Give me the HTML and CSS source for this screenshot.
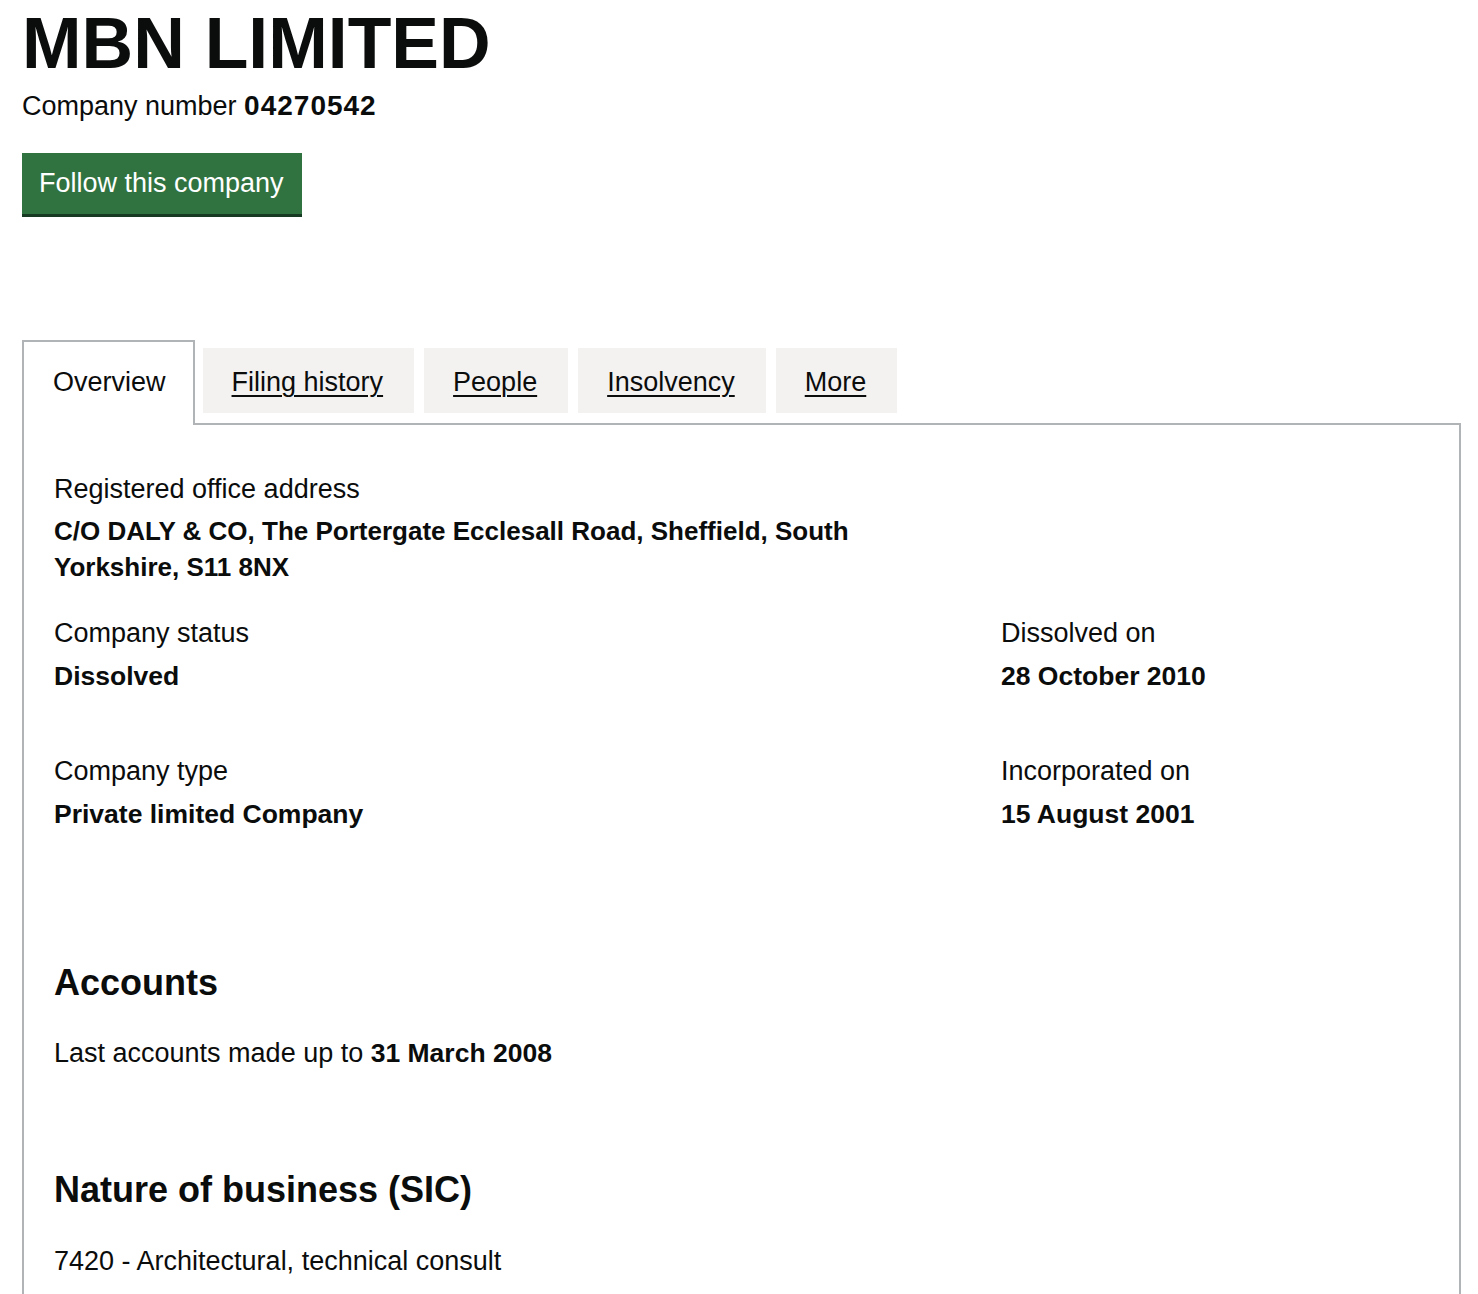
FILE: index.html
```html
<!DOCTYPE html>
<html lang="en">
<head>
<meta charset="utf-8">
<title>MBN LIMITED</title>
<link rel="stylesheet" href="styles.css">
</head>
<body>
<main class="page">
  <h1 class="company-name">MBN LIMITED</h1>
  <p class="company-number">Company number <strong>04270542</strong></p>
  <a class="button" href="#">Follow this company</a>

  <div class="tabs">
    <ul class="tab-list">
      <li class="tab tab-selected"><a class="tab-link" href="#">Overview</a></li>
      <li class="tab"><a class="tab-link" href="#">Filing history</a></li>
      <li class="tab"><a class="tab-link" href="#">People</a></li>
      <li class="tab"><a class="tab-link" href="#">Insolvency</a></li>
      <li class="tab"><a class="tab-link" href="#">More</a></li>
    </ul>
    <section class="panel">
      <dl class="address">
        <dt class="label label-address">Registered office address</dt>
        <dd class="value value-address">C/O DALY &amp; CO, The Portergate Ecclesall Road, Sheffield, South Yorkshire, S11 8NX</dd>
      </dl>

      <div class="grid grid-status">
        <dl class="item">
          <dt class="label">Company status</dt>
          <dd class="value">Dissolved</dd>
        </dl>
        <dl class="item">
          <dt class="label">Dissolved on</dt>
          <dd class="value">28 October 2010</dd>
        </dl>
      </div>

      <div class="grid grid-type">
        <dl class="item">
          <dt class="label">Company type</dt>
          <dd class="value">Private limited Company</dd>
        </dl>
        <dl class="item">
          <dt class="label">Incorporated on</dt>
          <dd class="value">15 August 2001</dd>
        </dl>
      </div>

      <h2 class="heading heading-accounts">Accounts</h2>
      <p class="body">Last accounts made up to <strong>31 March 2008</strong></p>

      <h2 class="heading heading-sic">Nature of business (SIC)</h2>
      <ul class="sic-list">
        <li class="body">7420 - Architectural, technical consult</li>
      </ul>
    </section>
  </div>
</main>
</body>
</html>
```
FILE: styles.css
```css
* { box-sizing: border-box; }

html, body {
  margin: 0;
  padding: 0;
  background: #ffffff;
}

body {
  color: #0b0c0c;
  font-family: "Liberation Sans", Arial, sans-serif;
  font-size: 27px;
  line-height: 36px;
}

.page {
  padding: 8px 17px 0 22px;
}

.company-name {
  margin: 0;
  font-size: 71.5px;
  line-height: 71px;
  font-weight: 700;
}

.company-number {
  margin: 9px 0 0;
}

.company-number strong {
  font-size: 28px;
  font-weight: 700;
  letter-spacing: 1px;
}

.button {
  display: inline-block;
  margin-top: 29px;
  padding: 12px 18px 13px 17px;
  background: #307340;
  color: #ffffff;
  text-decoration: none;
  box-shadow: 0 3px 0 #173a22;
  font-size: 27px;
  line-height: 36px;
}

.tabs {
  margin-top: 126px;
}

.tab-list {
  display: flex;
  align-items: flex-end;
  margin: 0;
  padding: 0;
  list-style: none;
}

.tab {
  margin: 0 10px 10px 0;
  background: #f3f2f1;
  padding: 16px 31px 13px 29px;
}

.tab-link {
  color: #0b0c0c;
  text-decoration: underline;
  text-underline-offset: 4px;
  text-decoration-thickness: 2px;
}

.tab-selected {
  position: relative;
  z-index: 1;
  margin: 0 8px -2px 0;
  background: #ffffff;
  border: 2px solid #b1b4b6;
  border-bottom: 0;
  padding: 22px 27px 25px 29px;
}

.tab-selected .tab-link {
  text-decoration: none;
}

.panel {
  border: 2px solid #b1b4b6;
  padding: 46px 30px 40px;
}

dl, dd { margin: 0; }

.label {
  font-weight: 400;
}

.label-address {
  margin-bottom: 6px;
}

.value {
  font-size: 26px;
  font-weight: 700;
  line-height: 36px;
}

.address {
  width: 916px;
}

.grid {
  display: grid;
  grid-template-columns: 2fr 1fr;
  column-gap: 91px;
}

.grid-status {
  margin-top: 30px;
}

.grid-type {
  margin-top: 59px;
}

.item .label {
  margin-bottom: 7px;
}

.item .value {
  font-size: 26.5px;
}

.heading {
  margin: 0;
  font-size: 36px;
  line-height: 40px;
  font-weight: 700;
}

.heading-accounts {
  margin-top: 131px;
}

.heading-sic {
  margin-top: 99px;
}

.body {
  margin: 32px 0 0;
}

.sic-list .body {
  margin-top: 33px;
}

.body strong {
  font-size: 26.5px;
  font-weight: 700;
}

.sic-list {
  list-style: none;
  margin: 0;
  padding: 0;
}
```
